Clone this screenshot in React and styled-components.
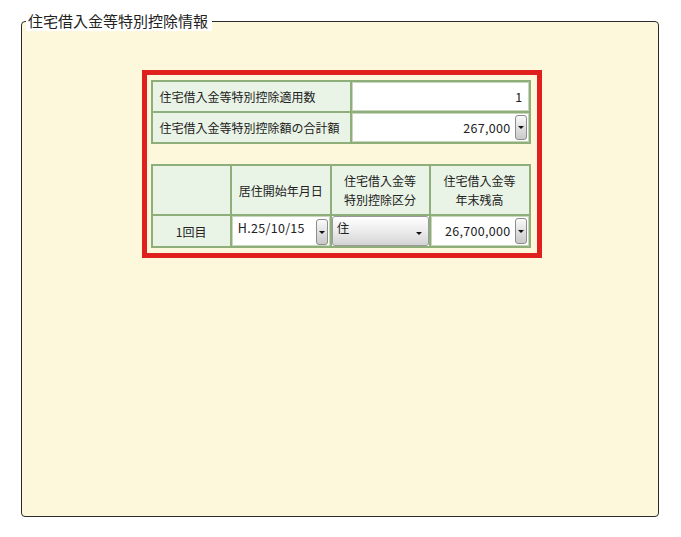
import React from "react";
import styled, { createGlobalStyle } from "styled-components";

const GlobalStyle = createGlobalStyle`
  html, body {
    margin: 0;
    padding: 0;
    background: #ffffff;
  }
  body {
    font-family: "Noto Sans CJK JP", "Liberation Sans", sans-serif;
    color: #222;
  }
`;

const Page = styled.div`
  width: 681px;
  height: 537px;
  padding: 11px 22px 0 21px;
  box-sizing: border-box;
`;

const Frame = styled.fieldset`
  margin: 0;
  padding: 0;
  height: 506px;
  box-sizing: border-box;
  border: 1px solid #2b2b2b;
  border-radius: 4px;
  background: #fdf8dc;
  display: flex;
  flex-direction: column;
  align-items: center;
`;

const Legend = styled.legend`
  margin-left: 4px;
  padding: 0 4px 0 2px;
  font-size: 15px;
  line-height: 20px;
  color: #222;
  background: #ffffff;
`;

const Highlight = styled.div`
  margin-top: 39px;
  margin-left: 3px;
  width: 400px;
  box-sizing: border-box;
  border: 5px solid #e0201e;
  padding: 5px 6px 5px 4px;
  display: flex;
  flex-direction: column;
  gap: 20px;
`;

const Table = styled.table`
  border-collapse: collapse;
  font-size: 12px;
  table-layout: fixed;
`;

const Label = styled.td`
  border: 2px solid #8eae7a;
  background: #e9f3e6;
  height: 29px;
  padding: 0 0 0 7px;
  width: ${(p) => p.$w}px;
  text-align: ${(p) => p.$align || "left"};
  line-height: 15px;
  white-space: nowrap;
`;

const Head = styled.th`
  border: 2px solid #8eae7a;
  background: #e9f3e6;
  height: 48px;
  width: ${(p) => p.$w}px;
  font-weight: normal;
  line-height: 19px;
  padding: 0;
  text-align: center;
`;

const ValueCell = styled.td`
  border: 2px solid #8eae7a;
  background: #ffffff;
  padding: 0;
  height: ${(p) => p.$h || 29}px;
`;

const Field = styled.div`
  display: flex;
  align-items: ${(p) => (p.$top ? "flex-start" : "center")};
  height: 100%;
  padding: ${(p) => (p.$top ? "2px 1px 0 5px" : "0 1px 0 5px")};
  box-sizing: border-box;
  border: 1px solid #c8d6c0;
`;

const FieldText = styled.span`
  flex: 1;
  text-align: ${(p) => p.$align || "left"};
  padding-right: ${(p) => (p.$align === "right" ? 4 : 0)}px;
  font-size: 12.5px;
  letter-spacing: 0.3px;
  line-height: 18px;
  color: #222;
`;

const DropButton = styled.span`
  width: 12px;
  height: ${(p) => p.$h || 25}px;
  box-sizing: border-box;
  border: 1px solid #8d8d8d;
  border-radius: 3px;
  background: linear-gradient(#fafafa, #dedede 55%, #c9c9c9);
  display: flex;
  align-items: center;
  justify-content: center;
  flex-shrink: 0;
  &::after {
    content: "";
    border-left: 3px solid transparent;
    border-right: 3px solid transparent;
    border-top: 3px solid #111;
  }
`;

const SelectBox = styled.div`
  height: 100%;
  box-sizing: border-box;
  border: 1px solid #9a9a9a;
  border-radius: 3px;
  background: linear-gradient(#ffffff, #ececec 50%, #d4d4d4);
  display: flex;
  align-items: flex-start;
  padding: 2px 8px 0 4px;
  font-size: 12.5px;
  line-height: 18px;
  position: relative;
  &::after {
    content: "";
    position: absolute;
    right: 6px;
    top: 15px;
    border-left: 3px solid transparent;
    border-right: 3px solid transparent;
    border-top: 3px solid #111;
  }
`;

export default function App() {
  return (
    <>
      <GlobalStyle />
      <Page>
        <Frame>
          <Legend>住宅借入金等特別控除情報</Legend>
          <Highlight>
            <Table>
              <tbody>
                <tr>
                  <Label $w={191}>住宅借入金等特別控除適用数</Label>
                  <ValueCell style={{ width: 180 }}>
                    <Field>
                      <FieldText $align="right">1</FieldText>
                    </Field>
                  </ValueCell>
                </tr>
                <tr>
                  <Label $w={191}>住宅借入金等特別控除額の合計額</Label>
                  <ValueCell>
                    <Field>
                      <FieldText $align="right">267,000</FieldText>
                      <DropButton />
                    </Field>
                  </ValueCell>
                </tr>
              </tbody>
            </Table>
            <Table>
              <thead>
                <tr>
                  <Head $w={78}></Head>
                  <Head $w={98}>居住開始年月日</Head>
                  <Head $w={98}>
                    住宅借入金等
                    <br />
                    特別控除区分
                  </Head>
                  <Head $w={98}>
                    住宅借入金等
                    <br />
                    年末残高
                  </Head>
                </tr>
              </thead>
              <tbody>
                <tr>
                  <Label $align="center" style={{ padding: 0 }}>
                    1回目
                  </Label>
                  <ValueCell $h={29}>
                    <Field $top>
                      <FieldText>H.25/10/15</FieldText>
                      <DropButton $h={26} />
                    </Field>
                  </ValueCell>
                  <ValueCell $h={29}>
                    <SelectBox>住</SelectBox>
                  </ValueCell>
                  <ValueCell $h={29}>
                    <Field>
                      <FieldText $align="right">26,700,000</FieldText>
                      <DropButton $h={26} />
                    </Field>
                  </ValueCell>
                </tr>
              </tbody>
            </Table>
          </Highlight>
        </Frame>
      </Page>
    </>
  );
}
